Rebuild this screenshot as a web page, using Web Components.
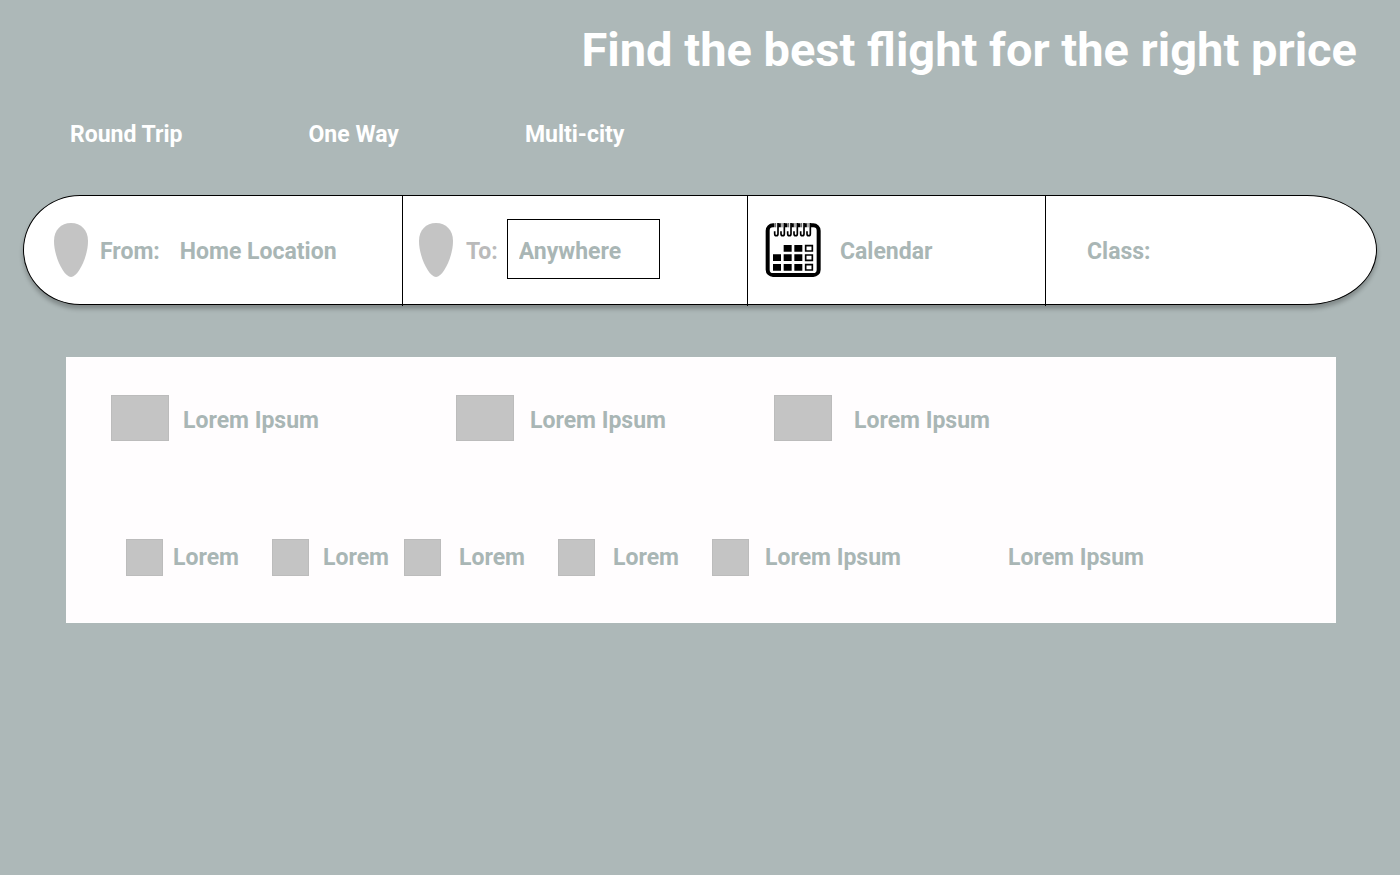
<!DOCTYPE html>
<html lang="en">
<head>
<meta charset="utf-8">
<meta name="viewport" content="width=device-width, initial-scale=1">
<title>Find the best flight</title>
<style>
  body {
    margin: 0;
    min-height: 100vh;
    background: #adb8b8;
    font: 700 23px/28px Roboto, "Liberation Sans", sans-serif;
    --ink: #a9b6b5;
    --block: #c4c4c4;
  }
</style>
</head>
<body>
<flight-page></flight-page>

<script>
class BaseElement extends HTMLElement {
  constructor() {
    super();
    const template = document.createElement('template');
    template.innerHTML = this.constructor.markup;
    this.attachShadow({ mode: 'open' }).append(template.content.cloneNode(true));
  }
}

customElements.define('map-pin', class extends BaseElement {
  static markup = `
    <style>
      :host { display: block; flex: none; width: 34px; height: 55px; }
      svg { display: block; }
    </style>
    <svg width="34" height="55" viewBox="0 0 34 55" aria-hidden="true">
      <path fill="#c4c4c4" d="M17 0C27 0 34 7 34 18C34 34 24 54 17 54C10 54 0 34 0 18C0 7 7 0 17 0Z"/>
    </svg>`;
});

customElements.define('calendar-icon', class extends BaseElement {
  static markup = `
    <style>
      :host { display: block; flex: none; width: 56px; height: 56px; }
      svg { display: block; }
    </style>
    <svg width="56" height="56" viewBox="75 36 168 168" aria-hidden="true">
      <rect x="83" y="46" width="153" height="149" rx="16" fill="#fff" stroke="#000" stroke-width="12"/>
      <g id="rings"></g>
      <g fill="#000">
        <path d="M131 105h24v20h-24zM163 105h24v20h-24zM99 133h24v20h-24zM131 133h24v20h-24zM163 133h24v20h-24zM99 162h24v20h-24zM131 162h24v20h-24zM163 162h24v20h-24z"/>
      </g>
      <path fill="none" stroke="#000" stroke-width="5" d="M197 107h20v16h-20zM197 135h20v16h-20zM197 164h20v16h-20z"/>
    </svg>`;
  constructor() {
    super();
    this.shadowRoot.getElementById('rings').innerHTML = [104, 123, 143, 162, 182, 201].map(x =>
      `<path d="M${x + 5} 36V60" stroke="#fff" stroke-width="11"/>
       <path d="M${x + 10} 39V71Q${x + 10} 77 ${x + 5} 77Q${x} 77 ${x} 71V64" fill="none" stroke="#000" stroke-width="5"/>
       <path d="M${x + 3} 39V52" stroke="#000" stroke-width="2"/>`).join('');
  }
});

customElements.define('trip-tabs', class extends BaseElement {
  static markup = `
    <style>
      :host { display: block; color: #fff; }
      nav { display: flex; gap: 126px; }
      button { border: 0; padding: 0; background: none; color: inherit; font: inherit; white-space: nowrap; cursor: pointer; }
    </style>
    <nav aria-label="Trip type">
      <button type="button">Round Trip</button>
      <button type="button">One Way</button>
      <button type="button">Multi-city</button>
    </nav>`;
});

customElements.define('search-bar', class extends BaseElement {
  static markup = `
    <style>
      :host { display: block; color: var(--ink); }
      form {
        display: grid;
        grid-template-columns: 378fr 345fr 298fr 331fr;
        min-height: 108px;
        background: #fff;
        border: 1px solid #000;
        border-radius: 57px 70px 70px 57px / 55px;
        box-shadow: 0 4px 4px rgba(0, 0, 0, .25);
      }
      .part { display: flex; align-items: center; min-width: 0; margin-bottom: -2px; padding: 0 17px 2px; }
      .part + .part { border-left: 1px solid #000; }
      .from { padding-left: 30px; }
      .to { padding-left: 16px; }
      .class { padding-left: 41px; }
      label { white-space: nowrap; }
      map-pin + label { padding-left: 12px; }
      input, select, button {
        box-sizing: border-box; min-width: 0; margin: 0; padding: 0; border: 0;
        background: none; color: inherit; font: inherit; outline-offset: 4px;
      }
      label, input, select, button span { padding-top: 3px; }
      .from input { flex: 1; margin-left: 20px; }
      .to label { padding-left: 13px; color: #bababa; }
      .to input { width: 153px; height: 60px; margin: 0 0 2px 9px; padding: 4px 11px 0; border: 1px solid #000; }
      button { display: flex; align-items: center; gap: 19px; cursor: pointer; }
      select { appearance: none; flex: 1; margin: 0 40px 0 8px; }
    </style>
    <form>
      <div class="part from">
        <map-pin></map-pin>
        <label for="from">From:</label>
        <input id="from" type="text" value="Home Location">
      </div>
      <div class="part to">
        <map-pin></map-pin>
        <label for="to">To:</label>
        <input id="to" type="text" value="Anywhere">
      </div>
      <div class="part">
        <button type="button"><calendar-icon></calendar-icon><span>Calendar</span></button>
      </div>
      <div class="part class">
        <label for="class">Class:</label>
        <select id="class"><option></option></select>
      </div>
    </form>`;
});

customElements.define('result-item', class extends BaseElement {
  static markup = `
    <style>
      :host { display: flex; align-items: center; min-width: 0; gap: 18px; white-space: nowrap; }
      :host([gap="xs"]) { gap: 10px; }
      :host([gap="s"]) { gap: 14px; }
      :host([gap="m"]) { gap: 16px; }
      :host([gap="l"]) { gap: 22px; }
      .thumb { flex: none; box-sizing: border-box; width: 37px; height: 37px; background: var(--block); border: 1px solid #bcbcbc; }
      :host([large]) { align-items: flex-end; line-height: 40px; }
      :host([large]) .thumb { width: 58px; height: 46px; }
      :host([plain]) .thumb { display: none; }
    </style>
    <span class="thumb"></span><span><slot></slot></span>`;
});

customElements.define('results-panel', class extends BaseElement {
  static markup = `
    <style>
      :host { display: block; padding: 37px 0 46px; background: #fffdfe; border: 1px solid #fff; border-width: 1px 0; box-sizing: border-box; color: var(--ink); }
      .row { display: grid; }
      .top { grid-template-columns: 345fr 318fr 562fr; padding-left: 45px; }
      .bottom { grid-template-columns: 146fr 132fr 154fr 154fr 296fr 328fr; padding-left: 60px; margin-top: 98px; }
    </style>
    <div class="row top">
      <result-item large gap="s">Lorem Ipsum</result-item>
      <result-item large gap="m">Lorem Ipsum</result-item>
      <result-item large gap="l">Lorem Ipsum</result-item>
    </div>
    <div class="row bottom">
      <result-item gap="xs">Lorem</result-item>
      <result-item gap="s">Lorem</result-item>
      <result-item>Lorem</result-item>
      <result-item>Lorem</result-item>
      <result-item gap="m">Lorem Ipsum</result-item>
      <result-item plain>Lorem Ipsum</result-item>
    </div>`;
});

customElements.define('flight-page', class extends BaseElement {
  static markup = `
    <style>
      :host { display: flex; flex-direction: column; padding: 22px 23px; }
      h1 { margin: 0 20px 0 0; color: #fff; font-size: 47px; line-height: 56px; text-align: right; }
      trip-tabs { margin: 43px 0 0 47px; }
      search-bar { margin-top: 46px; }
      results-panel { margin: 52px 41px 0 43px; }
    </style>
    <h1>Find the best flight for the right price</h1>
    <trip-tabs></trip-tabs>
    <main>
      <search-bar></search-bar>
      <results-panel></results-panel>
    </main>`;
});
</script>
</body>
</html>
